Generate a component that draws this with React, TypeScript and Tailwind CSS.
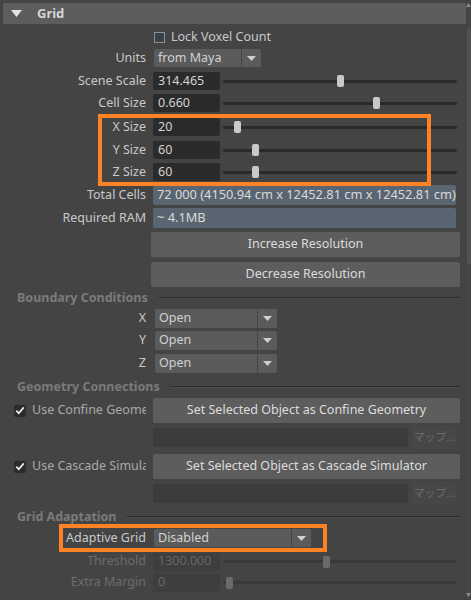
import React from 'react';

// Maya-style attribute editor: "Grid" section of a voxel solver

const LABEL = 'w-[143px] shrink-0 text-right text-[12.5px] leading-none';

function cn(...c: (string | false | undefined)[]) {
  return c.filter(Boolean).join(' ');
}

function Arrow() {
  return (
    <svg width="9" height="5" viewBox="0 0 9 5">
      <path d="M0 0 H9 L4.5 5 Z" fill="#cfcfcf" />
    </svg>
  );
}

function Row({
  label,
  className,
  dim,
  children,
}: {
  label?: string;
  className: string;
  dim?: boolean;
  children?: React.ReactNode;
}) {
  return (
    <div className={`flex items-center ${className}`}>
      <div className={`${LABEL} ${dim ? 'text-[#6c6c6c]' : 'text-[#c9c9c9]'}`}>{label}</div>
      <div className="ml-[7px] flex flex-1 items-center">{children}</div>
    </div>
  );
}

function NumField({ value, dim }: { value: string; dim?: boolean }) {
  return (
    <div
      className={cn(
        'flex h-[18px] w-[67px] items-center rounded-[2px] px-[5px] text-[12.5px]',
        dim ? 'bg-[#3e3e3e] text-[#676767]' : 'bg-[#2b2b2b] text-[#d2d2d2]'
      )}
    >
      {value}
    </div>
  );
}

function Slider({ pos, dim }: { pos: number; dim?: boolean }) {
  return (
    <div className="relative ml-[3px] flex h-[18px] w-[234px] items-center">
      <div className={cn('h-[3px] w-full rounded-full', dim ? 'bg-[#393939]' : 'bg-[#2a2a2a]')} />
      <div
        className={cn('absolute top-[3px] h-[12px] w-[7px] rounded-[2px]', dim ? 'bg-[#6a6a6a]' : 'bg-[#c9c9c9]')}
        style={{ left: pos - 3.5 }}
      />
    </div>
  );
}

function SliderRow({
  label,
  value,
  pos,
  className,
  dim,
}: {
  label: string;
  value: string;
  pos: number;
  className: string;
  dim?: boolean;
}) {
  return (
    <Row label={label} className={className} dim={dim}>
      <NumField value={value} dim={dim} />
      <Slider pos={pos} dim={dim} />
    </Row>
  );
}

function Dropdown({ value, w, className }: { value: string; w: string; className?: string }) {
  return (
    <div className={cn('flex h-full', className)}>
      <div className={cn('flex items-center rounded-l-[2px] bg-[#5b5b5b] px-[4px] text-[12.5px] text-[#d2d2d2]', w)}>
        {value}
      </div>
      <div className="ml-[1px] flex w-[19px] items-center justify-center rounded-r-[2px] bg-[#5b5b5b]">
        <Arrow />
      </div>
    </div>
  );
}

function Section({ title, className }: { title: string; className: string }) {
  return (
    <div className={`flex items-center gap-[10px] pl-[14px] pr-[6px] ${className}`}>
      <span className="text-[12.5px] font-bold leading-none text-[#7b7b7b]">{title}</span>
      <div className="flex flex-1 flex-col">
        <div className="h-px bg-[#2c2c2c]" />
        <div className="h-px bg-[#4c4c4c]" />
      </div>
    </div>
  );
}

function Check() {
  return (
    <div className="flex h-[12px] w-[12px] shrink-0 items-center justify-center rounded-[2px] bg-[#2b2b2b]">
      <svg width="10" height="9" viewBox="0 0 10 9">
        <path d="M1.2 4.6 L3.8 7.2 L8.8 1.4" stroke="#e6e6e6" strokeWidth="1.8" fill="none" />
      </svg>
    </div>
  );
}

function CheckButtonRow({ label, button, className }: { label: string; button: string; className: string }) {
  return (
    <div className={`flex items-center ${className}`}>
      <div className="flex w-[143px] shrink-0 items-center overflow-hidden pl-[11px]">
        <Check />
        <span className="ml-[6px] whitespace-nowrap text-[12.5px] text-[#a9a9a9]">{label}</span>
      </div>
      <button className="ml-[7px] h-full w-[307px] rounded-[2px] bg-[#5d5d5d] text-[12.5px] text-[#dcdcdc]">
        {button}
      </button>
    </div>
  );
}

function MapRow({ className }: { className: string }) {
  return (
    <div className={`flex items-center ${className}`}>
      <div className="w-[150px] shrink-0" />
      <div className="h-[19px] w-[255px] bg-[#3c3c3c]" />
      <div className="ml-[4px] flex h-full w-[45px] items-center justify-center rounded-[2px] bg-[#474747] text-[11px] text-[#6c6c6c]">
        マップ...
      </div>
    </div>
  );
}

export default function App() {
  return (
    <div className="relative flex h-[600px] w-[471px] overflow-hidden bg-[#444444] font-['Noto_Sans','Noto_Sans_CJK_JP',sans-serif]">
      <div className="flex flex-1 flex-col pl-[3px] pt-[3px]">
        {/* Section header */}
        <div className="flex h-[21px] items-center rounded-[2px] bg-[#5d5d5d]">
          <svg className="ml-[8px]" width="11" height="7" viewBox="0 0 11 7">
            <path d="M0 0 H11 L5.5 7 Z" fill="#e4e4e4" />
          </svg>
          <span className="ml-[15px] text-[13px] font-bold text-[#d6d6d6]">Grid</span>
        </div>

        <Row className="mt-[7px] h-[12px]">
          <div className="ml-[1px] h-[11px] w-[11px] border border-[#8593a0] bg-[#3b4046]" />
          <span className="ml-[6px] text-[12.5px] text-[#c9c9c9]">Lock Voxel Count</span>
        </Row>

        <Row label="Units" className="mt-[5px] h-[20px]">
          <Dropdown value="from Maya" w="w-[87px]" className="ml-[1px]" />
        </Row>

        <SliderRow label="Scene Scale" value="314.465" pos={117} className="mt-[4px] h-[18px]" />
        <SliderRow label="Cell Size" value="0.660" pos={153} className="mt-[4px] h-[18px]" />
        <SliderRow label="X Size" value="20" pos={14} className="mt-[6px] h-[18px]" />
        <SliderRow label="Y Size" value="60" pos={32} className="mt-[5px] h-[18px]" />
        <SliderRow label="Z Size" value="60" pos={32} className="mt-[4px] h-[18px]" />

        <Row label="Total Cells" className="mt-[5px] h-[18px]">
          <div className="flex h-full w-[303px] items-center overflow-hidden whitespace-nowrap rounded-[2px] bg-[#5a6572] px-[4px] text-[12.8px] text-[#dadada]">
            72 000 (4150.94 cm x 12452.81 cm x 12452.81 cm)
          </div>
        </Row>
        <Row label="Required RAM" className="mt-[5px] h-[18px]">
          <div className="flex h-full w-[303px] items-center rounded-[2px] bg-[#5a6572] px-[4px] text-[12.8px] text-[#dadada]">
            ~ 4.1MB
          </div>
        </Row>

        <div className="mt-[5px] flex h-[25px] pl-[148px]">
          <button className="w-[309px] rounded-[2px] bg-[#5d5d5d] text-[12.5px] text-[#dcdcdc]">Increase Resolution</button>
        </div>
        <div className="mt-[5px] flex h-[25px] pl-[148px]">
          <button className="w-[309px] rounded-[2px] bg-[#5d5d5d] text-[12.5px] text-[#dcdcdc]">Decrease Resolution</button>
        </div>

        <Section title="Boundary Conditions" className="mt-[4px] h-[14px]" />
        <Row label="X" className="mt-[4px] h-[19px]">
          <Dropdown value="Open" w="w-[102px]" className="ml-[2px]" />
        </Row>
        <Row label="Y" className="mt-[3px] h-[19px]">
          <Dropdown value="Open" w="w-[102px]" className="ml-[2px]" />
        </Row>
        <Row label="Z" className="mt-[4px] h-[19px]">
          <Dropdown value="Open" w="w-[102px]" className="ml-[2px]" />
        </Row>

        <Section title="Geometry Connections" className="mt-[7px] h-[14px]" />
        <CheckButtonRow
          label="Use Confine Geometry"
          button="Set Selected Object as Confine Geometry"
          className="mt-[4px] h-[25px]"
        />
        <MapRow className="mt-[3px] h-[23px]" />
        <CheckButtonRow
          label="Use Cascade Simulator"
          button="Set Selected Object as Cascade Simulator"
          className="mt-[5px] h-[25px]"
        />
        <MapRow className="mt-[3px] h-[23px]" />

        <Section title="Grid Adaptation" className="mt-[5px] h-[14px]" />
        <Row label="Adaptive Grid" className="mt-[5px] h-[18px]">
          <Dropdown value="Disabled" w="w-[137px]" className="ml-[1px]" />
        </Row>
        <SliderRow label="Threshold" value="1300.000" pos={103} dim className="mt-[6px] h-[17px]" />
        <SliderRow label="Extra Margin" value="0" pos={6} dim className="mt-[4px] h-[17px]" />
      </div>

      {/* Scrollbar */}
      <div className="flex w-[5px] flex-col items-center pt-[3px]">
        <svg width="5" height="4" viewBox="0 0 5 4">
          <path d="M0 4 H5 L2.5 0 Z" fill="#8a8a8a" />
        </svg>
        <div className="mt-[20px] h-[238px] w-[4px] rounded-[2px] bg-[#505050]" />
        <div className="flex-1" />
        <svg className="mb-[3px]" width="5" height="4" viewBox="0 0 5 4">
          <path d="M0 0 H5 L2.5 4 Z" fill="#8a8a8a" />
        </svg>
      </div>

      {/* Highlight annotations */}
      <div className="pointer-events-none absolute left-[98px] top-[114px] h-[72px] w-[333px] border-[4px] border-[#fd8226]" />
      <div className="pointer-events-none absolute left-[59px] top-[524px] h-[28px] w-[268px] border-[4px] border-[#fd8226]" />
    </div>
  );
}
